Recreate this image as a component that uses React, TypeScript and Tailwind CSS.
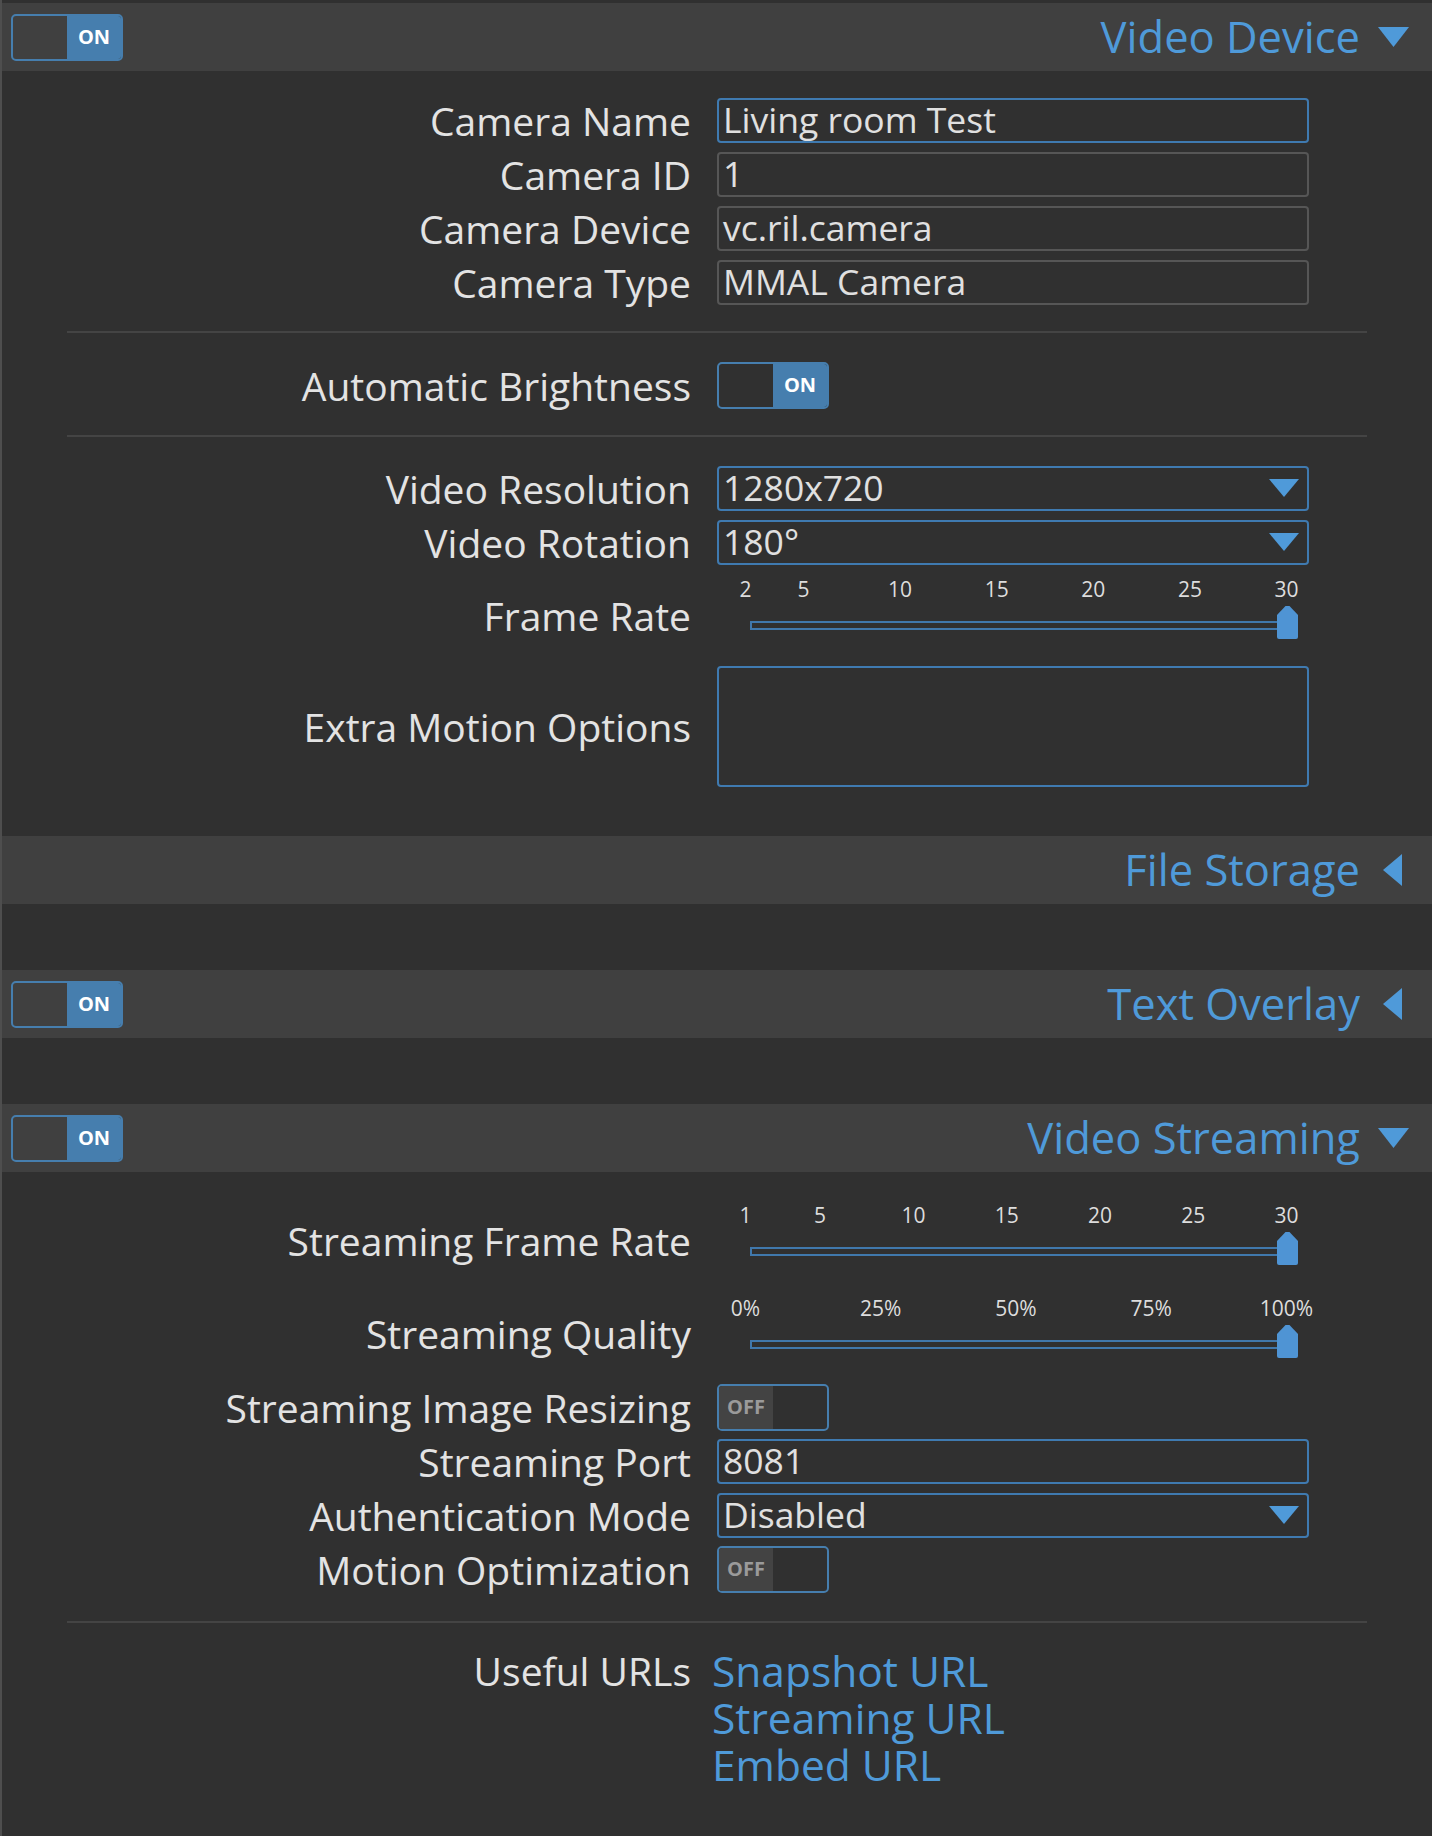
import React from "react";

type Tick = { v: number; label: string };

const FRAME_TICKS: Tick[] = [2, 5, 10, 15, 20, 25, 30].map((v) => ({ v, label: String(v) }));
const STREAM_TICKS: Tick[] = [1, 5, 10, 15, 20, 25, 30].map((v) => ({ v, label: String(v) }));
const QUALITY_TICKS: Tick[] = [0, 25, 50, 75, 100].map((v) => ({ v, label: `${v}%` }));

function Toggle({ on }: { on: boolean }) {
  if (on) {
    return (
      <div className="flex h-[47px] w-[112px] overflow-hidden rounded-[5px] border-2 border-[#467eae]">
        <div className="w-1/2" />
        <div className="flex w-1/2 items-center justify-center bg-[#467eae] text-[20px] font-bold text-white">
          ON
        </div>
      </div>
    );
  }
  return (
    <div className="flex h-[47px] w-[112px] overflow-hidden rounded-[5px] border-2 border-[#467eae]">
      <div className="flex w-1/2 items-center justify-center bg-[#434343] text-[20px] font-bold text-[#9a9a9a]">
        OFF
      </div>
      <div className="w-1/2" />
    </div>
  );
}

function Caret({ open }: { open: boolean }) {
  return (
    <svg width="31" height="34" viewBox="0 0 31 34">
      {open ? (
        <polygon points="0,7 31,7 15.5,27" fill="#4f9ad9" />
      ) : (
        <polygon points="24,1 24,33 5,17" fill="#4f9ad9" />
      )}
    </svg>
  );
}

function Section({
  title,
  open,
  toggle,
  children,
}: {
  title: string;
  open: boolean;
  toggle?: boolean;
  children?: React.ReactNode;
}) {
  return (
    <div>
      <div className="flex h-[68px] items-center justify-between bg-[#404040] pl-[9px] pr-[23px]">
        <div>{toggle && <Toggle on />}</div>
        <div className="flex items-center gap-[18px]">
          <span className="text-[43.5px] leading-none text-[#4f9ad9]">{title}</span>
          <Caret open={open} />
        </div>
      </div>
      <div className="pl-[65px] pt-[22px] pb-[44px]">{children}</div>
    </div>
  );
}

function Row({ label, height, children }: { label: string; height: string; children: React.ReactNode }) {
  return (
    <div className={`flex items-center ${height}`}>
      <div className="w-[624px] shrink-0 text-right text-[39px] leading-none text-[#e3e3e3]">{label}</div>
      <div className="ml-[26px] w-[592px]">{children}</div>
    </div>
  );
}

function TextInput({ value, focus }: { value: string; focus?: boolean }) {
  return (
    <div
      className={`flex h-[45px] items-center rounded-[4px] border-2 px-[4px] text-[35.5px] leading-none text-[#e0e0e0] ${
        focus ? "border-[#3f7ab0]" : "border-[#565656]"
      }`}
    >
      {value}
    </div>
  );
}

function Select({ value }: { value: string }) {
  return (
    <div className="flex h-[45px] items-center justify-between rounded-[4px] border-2 border-[#3f7ab0] pl-[4px] pr-[8px] text-[35.5px] leading-none text-[#e0e0e0]">
      <span>{value}</span>
      <svg width="30" height="18" viewBox="0 0 30 18">
        <polygon points="0,0 30,0 15,18" fill="#4f9ad9" />
      </svg>
    </div>
  );
}

function Slider({ ticks, min, max }: { ticks: Tick[]; min: number; max: number }) {
  return (
    <div className="relative h-[92px] w-[592px]">
      {ticks.map((t) => (
        <span
          key={t.label}
          className="absolute top-[8px] -translate-x-1/2 text-[21px] leading-[24px] text-[#dddddd]"
          style={{ left: 28.5 + ((t.v - min) / (max - min)) * 541 }}
        >
          {t.label}
        </span>
      ))}
      <div className="absolute left-[33px] top-[52px] h-[9px] w-[540px] border-2 border-[#4078ac]" />
      <svg className="absolute left-[560px] top-[37px]" width="21" height="33" viewBox="0 0 21 33">
        <path d="M8.5 0 L12.5 0 L21 9 L21 31 Q21 33 19 33 L2 33 Q0 33 0 31 L0 9 Z" fill="#4f94d4" />
      </svg>
    </div>
  );
}

function Separator({ top }: { top: string }) {
  return <div className={`${top} mb-[24px] h-[2px] w-[1300px] bg-[#444444]`} />;
}

export default function App() {
  return (
    <div className="min-h-screen w-[1432px] border-l-2 border-[#4e4e4e] bg-[#303030] pt-[3px] [font-family:'Open_Sans','Noto_Sans',sans-serif]">
      <Section title="Video Device" open toggle>
        <Row label="Camera Name" height="h-[54px]">
          <TextInput value="Living room Test" focus />
        </Row>
        <Row label="Camera ID" height="h-[54px]">
          <TextInput value="1" />
        </Row>
        <Row label="Camera Device" height="h-[54px]">
          <TextInput value="vc.ril.camera" />
        </Row>
        <Row label="Camera Type" height="h-[54px]">
          <TextInput value="MMAL Camera" />
        </Row>
        <Separator top="mt-[22px]" />
        <Row label="Automatic Brightness" height="h-[56px]">
          <Toggle on />
        </Row>
        <Separator top="mt-[22px]" />
        <Row label="Video Resolution" height="h-[54px]">
          <Select value="1280x720" />
        </Row>
        <Row label="Video Rotation" height="h-[54px]">
          <Select value="180°" />
        </Row>
        <Row label="Frame Rate" height="h-[92px]">
          <Slider ticks={FRAME_TICKS} min={2} max={30} />
        </Row>
        <Row label="Extra Motion Options" height="h-[131px]">
          <div className="h-[121px] rounded-[4px] border-2 border-[#3f7ab0]" />
        </Row>
      </Section>

      <Section title="File Storage" open={false} />

      <Section title="Text Overlay" open={false} toggle />

      <Section title="Video Streaming" open toggle>
        <Row label="Streaming Frame Rate" height="h-[93px]">
          <Slider ticks={STREAM_TICKS} min={1} max={30} />
        </Row>
        <Row label="Streaming Quality" height="h-[93px]">
          <Slider ticks={QUALITY_TICKS} min={0} max={100} />
        </Row>
        <Row label="Streaming Image Resizing" height="h-[54px]">
          <Toggle on={false} />
        </Row>
        <Row label="Streaming Port" height="h-[54px]">
          <TextInput value="8081" focus />
        </Row>
        <Row label="Authentication Mode" height="h-[54px]">
          <Select value="Disabled" />
        </Row>
        <Row label="Motion Optimization" height="h-[54px]">
          <Toggle on={false} />
        </Row>
        <Separator top="mt-[25px]" />
        <div className="flex items-start">
          <div className="w-[624px] shrink-0 text-right text-[39px] leading-[47px] text-[#e3e3e3]">Useful URLs</div>
          <div className="ml-[21px] flex flex-col text-[42.5px] leading-[47px] text-[#4f9ad9]">
            <a href="#">Snapshot URL</a>
            <a href="#">Streaming URL</a>
            <a href="#">Embed URL</a>
          </div>
        </div>
      </Section>
    </div>
  );
}
